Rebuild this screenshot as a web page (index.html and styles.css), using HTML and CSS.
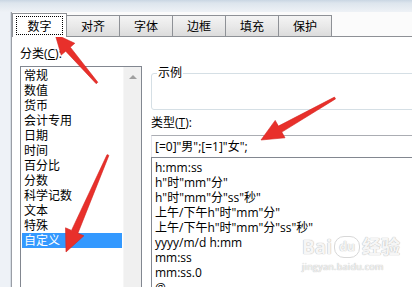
FILE: index.html
```html
<!DOCTYPE html>
<html lang="zh-CN">
<head>
    <meta charset="UTF-8">
    <meta name="viewport" content="width=device-width, initial-scale=1.0">
    <title>设置单元格格式</title>
    <link rel="stylesheet" href="styles.css">
</head>
<body>
    <div class="screen">
        <div class="titlebar"></div>
        <div class="main">
            <div class="side"></div>
            <div class="dialog">
                <div class="tabs">
                    <div class="tab active"><span class="focus">数字</span></div>
                    <div class="tab">对齐</div>
                    <div class="tab">字体</div>
                    <div class="tab">边框</div>
                    <div class="tab">填充</div>
                    <div class="tab">保护</div>
                </div>

                <div class="panel">
                    <div class="col-left">
                        <div class="label">分类(<u>C</u>):</div>
                        <div class="listbox">
                            <ul class="items">
                                <li>常规</li>
                                <li>数值</li>
                                <li>货币</li>
                                <li>会计专用</li>
                                <li>日期</li>
                                <li>时间</li>
                                <li>百分比</li>
                                <li>分数</li>
                                <li>科学记数</li>
                                <li>文本</li>
                                <li>特殊</li>
                                <li class="selected">自定义</li>
                            </ul>
                            <div class="scrollbar"><span class="arrow-up"></span></div>
                        </div>
                    </div>

                    <div class="col-right">
                        <div class="sample">
                            <span class="legend">示例</span>
                        </div>
                        <div class="label type-label">类型(<u>T</u>):</div>
                        <div class="type-input">[=0]"男";[=1]"女";</div>
                        <ul class="formats">
                            <li>h:mm:ss</li>
                            <li>h"时"mm"分"</li>
                            <li>h"时"mm"分"ss"秒"</li>
                            <li>上午/下午h"时"mm"分"</li>
                            <li>上午/下午h"时"mm"分"ss"秒"</li>
                            <li>yyyy/m/d h:mm</li>
                            <li>mm:ss</li>
                            <li>mm:ss.0</li>
                            <li>@</li>
                        </ul>
                    </div>
                </div>
            </div>
        </div>

        <!-- red annotation arrows drawn over the screenshot -->
        <svg class="arrows" width="412" height="287" viewBox="0 0 412 287">
            <polygon points="97.8,82.3 70.3,47.2 74.8,43.3 55,34 61.2,55.1 65.7,51.2 96.2,83.7" />
            <polygon points="107.1,154.6 71.5,230.4 65.5,227.8 66,252 83.9,235.8 77.9,233.2 108.9,155.4" />
            <polygon points="334.5,97.1 278.4,126.1 275.2,120.4 261,140 285,137.8 281.8,132.1 335.5,98.9" />
        </svg>

        <div class="watermark">
            <div class="wm-logo">Bai<span class="paw">du</span>经验</div>
            <div class="wm-url">jingyan.baidu.com</div>
        </div>
    </div>
</body>
</html>
```

FILE: styles.css
```css
body {
    margin: 0;
    padding: 0;
    font-family: "Open Sans", "Noto Sans CJK SC", sans-serif;
    font-size: 12px;
    color: #000;
    background: #fff;
    overflow: hidden;
}

.screen {
    width: 412px;
    height: 287px;
    position: relative;
    overflow: hidden;
}

.titlebar {
    height: 12px;
    background: linear-gradient(#c9d6e3 0, #dde5ed 3px, #eef2f6 12px);
}

.main {
    display: flex;
    height: 275px;
}

.side {
    flex: 0 0 10px;
    background: #eef2f7;
    border-right: 1px solid #d6dde5;
}

.dialog {
    flex: 1;
    min-width: 0;
    overflow: hidden;
    border-left: 1px solid #9a9ea6;
    background: #fff;
    display: flex;
    flex-direction: column;
}

/* tab strip */
.tabs {
    flex: 0 0 24px;
    display: flex;
    align-items: flex-end;
    background: #fbfbfb;
}

.tab {
    flex: 0 0 52px;
    height: 20px;
    margin-left: -1px;
    border: 1px solid #8e9196;
    border-bottom: none;
    background: linear-gradient(#f4f4f4, #e9e9e9 50%, #dcdcdc);
    display: flex;
    align-items: center;
    justify-content: center;
}

.tab.active {
    flex-basis: 53px;
    height: 23px;
    margin-left: 0;
    margin-bottom: -1px;
    background: #fff;
    position: relative;
    z-index: 1;
}

.focus {
    width: 45px;
    height: 17px;
    border: 1px dotted #000;
    display: flex;
    align-items: center;
    justify-content: center;
}

/* tab body */
.panel {
    flex: 1;
    border-top: 1px solid #8e9196;
    padding: 10px 0 0 8px;
    display: flex;
    gap: 9px;
}

.label {
    height: 14px;
    line-height: 14px;
}

.col-left {
    flex: 0 0 122px;
}

.col-left .label {
    margin-bottom: 5px;
}

.listbox {
    width: 120px;
    height: 240px;
    border: 1px solid #828790;
    display: flex;
}

.items {
    flex: 1;
    list-style: none;
    margin: 0;
    padding: 1px;
}

.items li {
    height: 15px;
    line-height: 15px;
    padding-left: 2px;
}

.items li.selected {
    background: #3399ff;
    color: #fff;
}

.scrollbar {
    flex: 0 0 17px;
    background: #f0f0f0;
    border-left: 1px solid #f6f6f6;
    display: flex;
    justify-content: center;
}

.arrow-up {
    width: 0;
    height: 0;
    margin-top: 8px;
    border-left: 4px solid transparent;
    border-right: 4px solid transparent;
    border-bottom: 4px solid #a0a0a0;
}

.col-right {
    flex: 0 0 300px;
    padding-top: 26px;
}

.sample {
    box-sizing: border-box;
    height: 37px;
    padding-left: 5px;
    border: 1px solid #d5dfe5;
    border-radius: 3px;
}

.legend {
    display: inline-block;
    margin-top: -8px;
    padding: 0 1px;
    line-height: 14px;
    background: #fff;
    vertical-align: top;
}

.type-label {
    margin-top: 6px;
}

.type-input {
    height: 22px;
    margin-top: 5px;
    box-sizing: border-box;
    border: 1px solid #e2e3ea;
    border-top-color: #abadb3;
    border-bottom: none;
    padding-left: 3px;
    line-height: 21px;
}

.formats {
    list-style: none;
    margin: 0;
    height: 140px;
    padding: 2px 0 0 0;
    border-top: 1px solid #828790;
    border-left: 1px solid #828790;
}

.formats li {
    height: 15px;
    line-height: 15px;
    padding-left: 3px;
}

/* overlays */
.arrows {
    position: absolute;
    left: 0;
    top: 0;
}

.arrows polygon {
    fill: #e8302b;
    stroke: #d42520;
    stroke-width: 0.6;
}

.watermark {
    position: absolute;
    left: 302px;
    top: 236px;
    color: #f6f6f6;
    text-shadow: 0 0 1px #bdbdbd, 0 0 1px #bdbdbd;
}

.wm-logo {
    font-size: 19px;
    font-weight: bold;
    line-height: 22px;
    display: flex;
    align-items: center;
    gap: 2px;
}

.paw {
    font-size: 12px;
    width: 24px;
    height: 20px;
    border-radius: 10px;
    border: 1px solid #d8d8d8;
    display: flex;
    align-items: center;
    justify-content: center;
}

.wm-url {
    font-size: 9px;
    line-height: 11px;
    margin-top: 3px;
    letter-spacing: 0.3px;
}
```
